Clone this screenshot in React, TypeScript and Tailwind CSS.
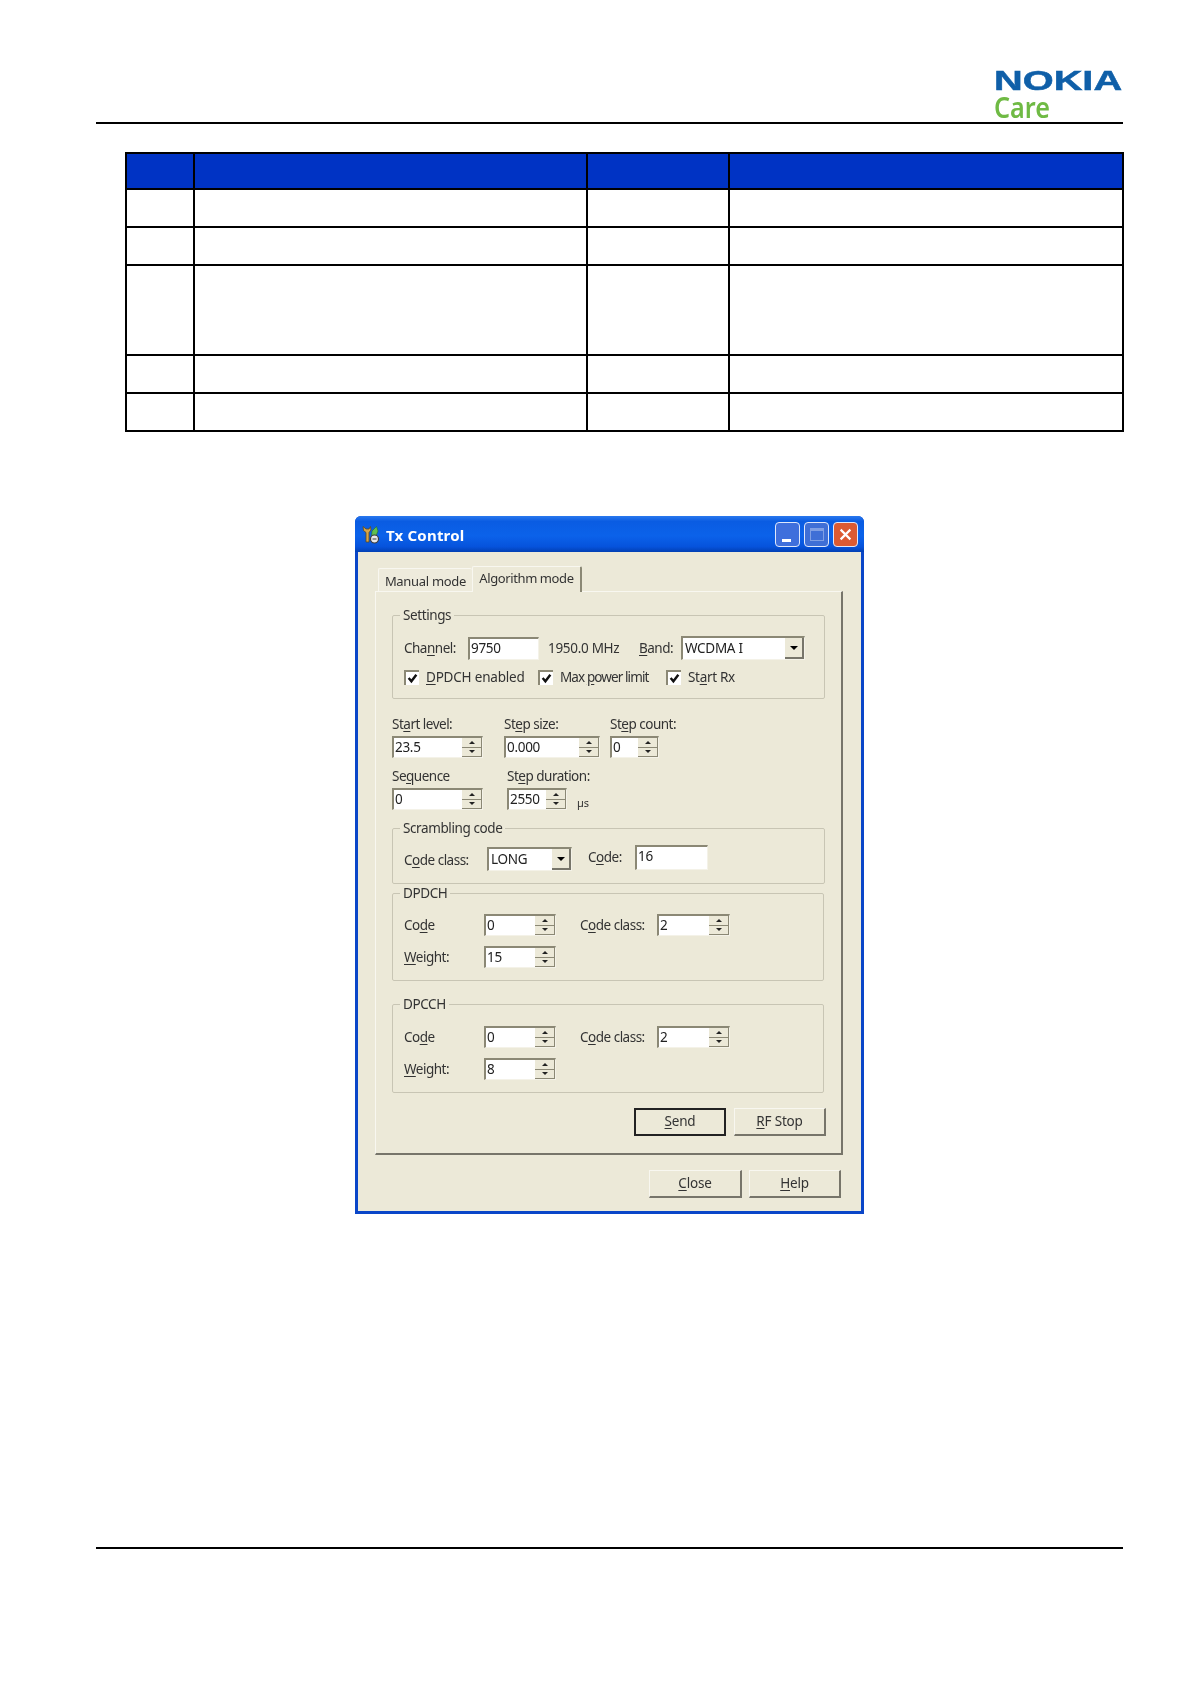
const ui = "font-['Noto_Sans','Open_Sans',sans-serif]"

function Mnemonic({ text, at }: { text: string; at?: number }) {
  if (at === undefined) return <>{text}</>
  return (
    <>
      {text.slice(0, at)}
      <span className="underline underline-offset-2">{text[at]}</span>
      {text.slice(at + 1)}
    </>
  )
}

function Field({ value, w, h = 'h-[23px]' }: { value: string; w: string; h?: string }) {
  return (
    <div className={`${w} ${h} shrink-0 bg-white border-t-2 border-l-2 border-t-[#8b8875] border-l-[#8b8875] border-b border-r border-b-[#f4f2e8] border-r-[#f4f2e8] pl-[1px] text-[13.5px] tracking-[-0.3px] leading-[19px] text-[#222]`}>
      {value}
    </div>
  )
}

function Spin({ value, w }: { value: string; w: string }) {
  return (
    <div className={`${w} h-[22px] shrink-0 flex bg-white border-t-2 border-l-2 border-t-[#8b8875] border-l-[#8b8875] border-b border-r border-b-[#f4f2e8] border-r-[#f4f2e8] text-[13.5px] tracking-[-0.3px] leading-[18px] text-[#222]`}>
      <div className="flex-1 pl-[1px]">{value}</div>
      <div className="w-[20px] flex flex-col bg-[#ece9d8] border-r border-[#8b8875]">
        <div className="flex-1 flex items-center justify-center border-b border-[#8b8875]">
          <div className="w-0 h-0 border-x-[3px] border-x-transparent border-b-[3px] border-b-[#222]" />
        </div>
        <div className="flex-1 flex items-center justify-center border-b border-[#8b8875]">
          <div className="w-0 h-0 border-x-[3px] border-x-transparent border-t-[3px] border-t-[#222]" />
        </div>
      </div>
    </div>
  )
}

function Combo({ value, w }: { value: string; w: string }) {
  return (
    <div className={`${w} h-[24px] shrink-0 flex bg-white border-t-2 border-l-2 border-t-[#8b8875] border-l-[#8b8875] border-b border-r border-b-[#f4f2e8] border-r-[#f4f2e8] text-[13.5px] tracking-[-0.3px] leading-[20px] text-[#222]`}>
      <div className="flex-1 pl-[2px]">{value}</div>
      <div className="w-[19px] flex items-center justify-center bg-[#ece9d8] border-r-2 border-b-2 border-[#77756a]">
        <div className="w-0 h-0 border-x-[4px] border-x-transparent border-t-[4px] border-t-black" />
      </div>
    </div>
  )
}

function Check({ label, at, w, spacing }: { label: string; at: number; w: string; spacing: string }) {
  return (
    <div className={`${w} flex items-center`}>
      <div className="w-[15px] h-[15px] bg-white border-t-2 border-l-2 border-t-[#8b8875] border-l-[#8b8875] flex items-center justify-center">
        <svg viewBox="0 0 10 10" className="w-[11px] h-[11px]">
          <path d="M1.5 4.5 L4 7.5 L8.5 1.5" fill="none" stroke="#111" strokeWidth="2.2" />
        </svg>
      </div>
      <span className={`ml-[7px] text-[13.5px] leading-[16px] text-[#333] whitespace-nowrap ${spacing}`}>
        <Mnemonic text={label} at={at} />
      </span>
    </div>
  )
}

function Group({ title, className, children }: { title: string; className: string; children: React.ReactNode }) {
  return (
    <div className={`relative border border-[#c8c5b4] rounded-[2px] pl-[11px] ${className}`}>
      <span className="absolute -top-[10px] left-[7px] bg-[#ece9d8] px-[3px] text-[13.5px] tracking-[-0.4px] leading-[18px] text-[#333]">{title}</span>
      {children}
    </div>
  )
}

function Label({ text, at, className = '' }: { text: string; at?: number; className?: string }) {
  return (
    <span className={`text-[13.5px] leading-[16px] text-[#333] tracking-[-0.5px] whitespace-nowrap ${className}`}>
      <Mnemonic text={text} at={at} />
    </span>
  )
}

function Button({ text, at, w, primary }: { text: string; at: number; w: string; primary?: boolean }) {
  return (
    <div className={`${w} h-[28px] flex items-center justify-center text-[13.5px] tracking-[-0.2px] text-[#333] bg-[#ece9d8] ${primary ? 'border-2 border-[#222]' : 'border-r-2 border-b-2 border-r-[#77756a] border-b-[#77756a] border-t border-l border-t-[#f8f7f0] border-l-[#f8f7f0]'}`}>
      <span className="-mt-[1px]"><Mnemonic text={text} at={at} /></span>
    </div>
  )
}

function CodeRows({ code, weight }: { code: string; weight: string }) {
  return (
    <>
      <div className="flex items-center">
        <Label text="Code" at={2} className="w-[80px]" />
        <Spin value={code} w="w-[72px]" />
        <Label text="Code class:" at={1} className="ml-[24px] w-[77px]" />
        <Spin value="2" w="w-[73px]" />
      </div>
      <div className="flex items-center mt-[10px]">
        <Label text="Weight:" at={0} className="w-[80px]" />
        <Spin value={weight} w="w-[72px]" />
      </div>
    </>
  )
}

function TitleIcon() {
  return (
    <svg viewBox="0 0 19 19" className="w-[19px] h-[19px] ml-[6px]">
      <path d="M2 1.5 L2.5 5.5 L5 7.5 L5 17 L8 17 L8 7.5 L10 5 L9.5 1.5 L8 4 L5 4 Z" fill="#d8a548" stroke="#5a4a20" strokeWidth="0.8" />
      <path d="M15.5 1.5 L11 6 L10.5 12 L15 11 L17 6 Z" fill="#5fc04f" stroke="#2a6a2a" strokeWidth="0.6" />
      <circle cx="13.5" cy="14" r="4" fill="#e8e8e8" stroke="#3a3a3a" strokeWidth="1.2" />
      <path d="M11.5 14 L15.5 14" stroke="#3a3a3a" strokeWidth="1" />
    </svg>
  )
}

function TitleButton({ tone, children }: { tone: string; children: React.ReactNode }) {
  return (
    <div className={`w-[25px] h-[25px] rounded-[4px] border border-[#dfe8fb] flex items-center justify-center ${tone}`}>
      {children}
    </div>
  )
}

function TxControl() {
  return (
    <div className={`w-[509px] rounded-t-[6px] overflow-hidden bg-[#0a46c8] px-[3px] pb-[3px] blur-[0.4px] ${ui}`}>
      <div className="-mx-[3px] h-[36px] flex items-center bg-[linear-gradient(180deg,#2a78ee_0%,#0a5ce2_15%,#0b62ea_55%,#0653dc_85%,#0240b4_100%)]">
        <TitleIcon />
        <span className="ml-[6px] mt-[2px] text-[15px] font-bold text-white tracking-[0.2px]">Tx Control</span>
        <div className="ml-auto mr-[6px] flex gap-[4px]">
          <TitleButton tone="bg-[#3f6fdc]">
            <div className="w-[9px] h-[3px] mt-[12px] -ml-[3px] bg-white" />
          </TitleButton>
          <TitleButton tone="bg-[#3f6fd6] border-[#9db8ee]">
            <div className="w-[14px] h-[13px] border border-[#7f9fe4] border-t-[3px]" />
          </TitleButton>
          <TitleButton tone="bg-[#dc5a32]">
            <svg viewBox="0 0 12 12" className="w-[13px] h-[13px]">
              <path d="M1.5 1.5 L10.5 10.5 M10.5 1.5 L1.5 10.5" stroke="#fff" strokeWidth="2" />
            </svg>
          </TitleButton>
        </div>
      </div>

      <div className="bg-[#ece9d8] pt-[14px] pl-[17px] pr-[18px]">
        <div className="flex items-end h-[25px] pl-[3px]">
          <div className="w-[94px] h-[23px] bg-[#eeebdc] border-t border-l border-[#f8f7f0] rounded-t-[2px] text-center text-[13px] leading-[25px] text-[#333] tracking-[-0.3px]">
            Manual mode
          </div>
          <div className="relative z-10 -mb-px w-[110px] h-[26px] bg-[#ece9d8] border-t border-l border-[#f8f7f0] border-r-2 border-r-[#8b8875] rounded-t-[2px] text-center text-[13px] leading-[22px] text-[#333] tracking-[-0.4px]">
            Algorithm mode
          </div>
        </div>

        <div className="h-[564px] border-t border-l border-t-[#f8f7f0] border-l-[#f8f7f0] border-r-2 border-b-2 border-r-[#77756a] border-b-[#77756a] pl-[16px] pr-[15px] pt-[23px]">
          <Group title="Settings" className="w-[433px] h-[84px] pt-[20px]">
            <div className="flex items-center">
              <Label text="Channel:" at={3} className="w-[64px]" />
              <Field value="9750" w="w-[71px]" />
              <span className="ml-[9px] w-[91px] text-[13.5px] text-[#333] tracking-[-0.3px] whitespace-nowrap">1950.0 MHz</span>
              <Label text="Band:" at={0} className="w-[42px]" />
              <Combo value="WCDMA I" w="w-[124px]" />
            </div>
            <div className="flex mt-[9px]">
              <Check label="DPDCH enabled" at={0} w="w-[134px]" spacing="tracking-[-0.2px]" />
              <Check label="Max power limit" at={4} w="w-[128px]" spacing="tracking-[-0.9px]" />
              <Check label="Start Rx" at={2} w="w-[80px]" spacing="tracking-[-0.3px]" />
            </div>
          </Group>

          <div className="flex mt-[17px]">
            <div className="w-[112px] flex flex-col gap-[4px]">
              <Label text="Start level:" at={2} />
              <Spin value="23.5" w="w-[91px]" />
            </div>
            <div className="w-[106px] flex flex-col gap-[4px]">
              <Label text="Step size:" at={2} />
              <Spin value="0.000" w="w-[96px]" />
            </div>
            <div className="flex flex-col gap-[4px]">
              <Label text="Step count:" at={2} />
              <Spin value="0" w="w-[49px]" />
            </div>
          </div>

          <div className="flex mt-[10px]">
            <div className="w-[115px] flex flex-col gap-[4px]">
              <Label text="Sequence" at={2} />
              <Spin value="0" w="w-[91px]" />
            </div>
            <div className="flex flex-col gap-[4px]">
              <Label text="Step duration:" at={2} />
              <div className="flex items-end">
                <Spin value="2550" w="w-[60px]" />
                <span className="ml-[10px] text-[11px] leading-[14px] text-[#333]">µs</span>
              </div>
            </div>
          </div>

          <Group title="Scrambling code" className="w-[433px] h-[56px] mt-[18px] pt-[16px]">
            <div className="flex items-start">
              <Label text="Code class:" at={1} className="w-[83px] mt-[7px]" />
              <div className="mt-[2px]">
                <Combo value="LONG" w="w-[85px]" />
              </div>
              <Label text="Code:" at={1} className="ml-[16px] w-[47px] mt-[4px]" />
              <Field value="16" w="w-[73px]" h="h-[25px]" />
            </div>
          </Group>

          <Group title="DPDCH" className="w-[432px] h-[88px] mt-[9px] pt-[20px]">
            <CodeRows code="0" weight="15" />
          </Group>

          <Group title="DPCCH" className="w-[432px] h-[89px] mt-[23px] pt-[21px]">
            <CodeRows code="0" weight="8" />
          </Group>

          <div className="flex justify-end gap-[8px] mt-[15px]">
            <Button text="Send" at={0} w="w-[92px]" primary />
            <Button text="RF Stop" at={0} w="w-[92px]" />
          </div>
        </div>

        <div className="flex justify-end gap-[7px] mt-[15px] pb-[13px] pr-[2px]">
          <Button text="Close" at={0} w="w-[93px]" />
          <Button text="Help" at={0} w="w-[92px]" />
        </div>
      </div>
    </div>
  )
}

function Logo() {
  return (
    <div className="w-[129px] flex flex-col">
      <span className="h-[24px] origin-left scale-x-[1.42] text-[28px] leading-[24px] font-bold text-[#0f5fa8] font-['Liberation_Sans',sans-serif] [-webkit-text-stroke:0.5px_#0f5fa8]">
        NOKIA
      </span>
      <span className="h-[24px] mt-[2px] origin-left scale-x-[0.9] text-[28px] leading-[24px] font-semibold text-[#6fba44] font-['Noto_Sans',sans-serif]">
        Care
      </span>
    </div>
  )
}

const rowHeights = ['h-[38px]', 'h-[38px]', 'h-[90px]', 'h-[38px]', 'h-[38px]']

export default function App() {
  return (
    <div className="w-[1191px] h-[1684px] bg-white flex flex-col">
      <header className="ml-[96px] mr-[68px] mt-[69px]">
        <div className="flex justify-end">
          <Logo />
        </div>
        <div className="h-[2px] mt-[3px] bg-black" />
      </header>

      <table className="ml-[125px] mt-[28px] w-[999px] table-fixed border-collapse border-2 border-black">
        <colgroup>
          <col className="w-[68px]" />
          <col className="w-[393px]" />
          <col className="w-[142px]" />
          <col />
        </colgroup>
        <thead>
          <tr className="h-[36px] bg-[#0033c4]">
            {[0, 1, 2, 3].map((c) => (
              <th key={c} className="border-2 border-black" />
            ))}
          </tr>
        </thead>
        <tbody>
          {rowHeights.map((h, r) => (
            <tr key={r} className={h}>
              {[0, 1, 2, 3].map((c) => (
                <td key={c} className="border-2 border-black" />
              ))}
            </tr>
          ))}
        </tbody>
      </table>

      <div className="ml-[355px] mt-[84px]">
        <TxControl />
      </div>

      <footer className="ml-[96px] mr-[68px] mt-auto mb-[135px] h-[2px] bg-black" />
    </div>
  )
}
